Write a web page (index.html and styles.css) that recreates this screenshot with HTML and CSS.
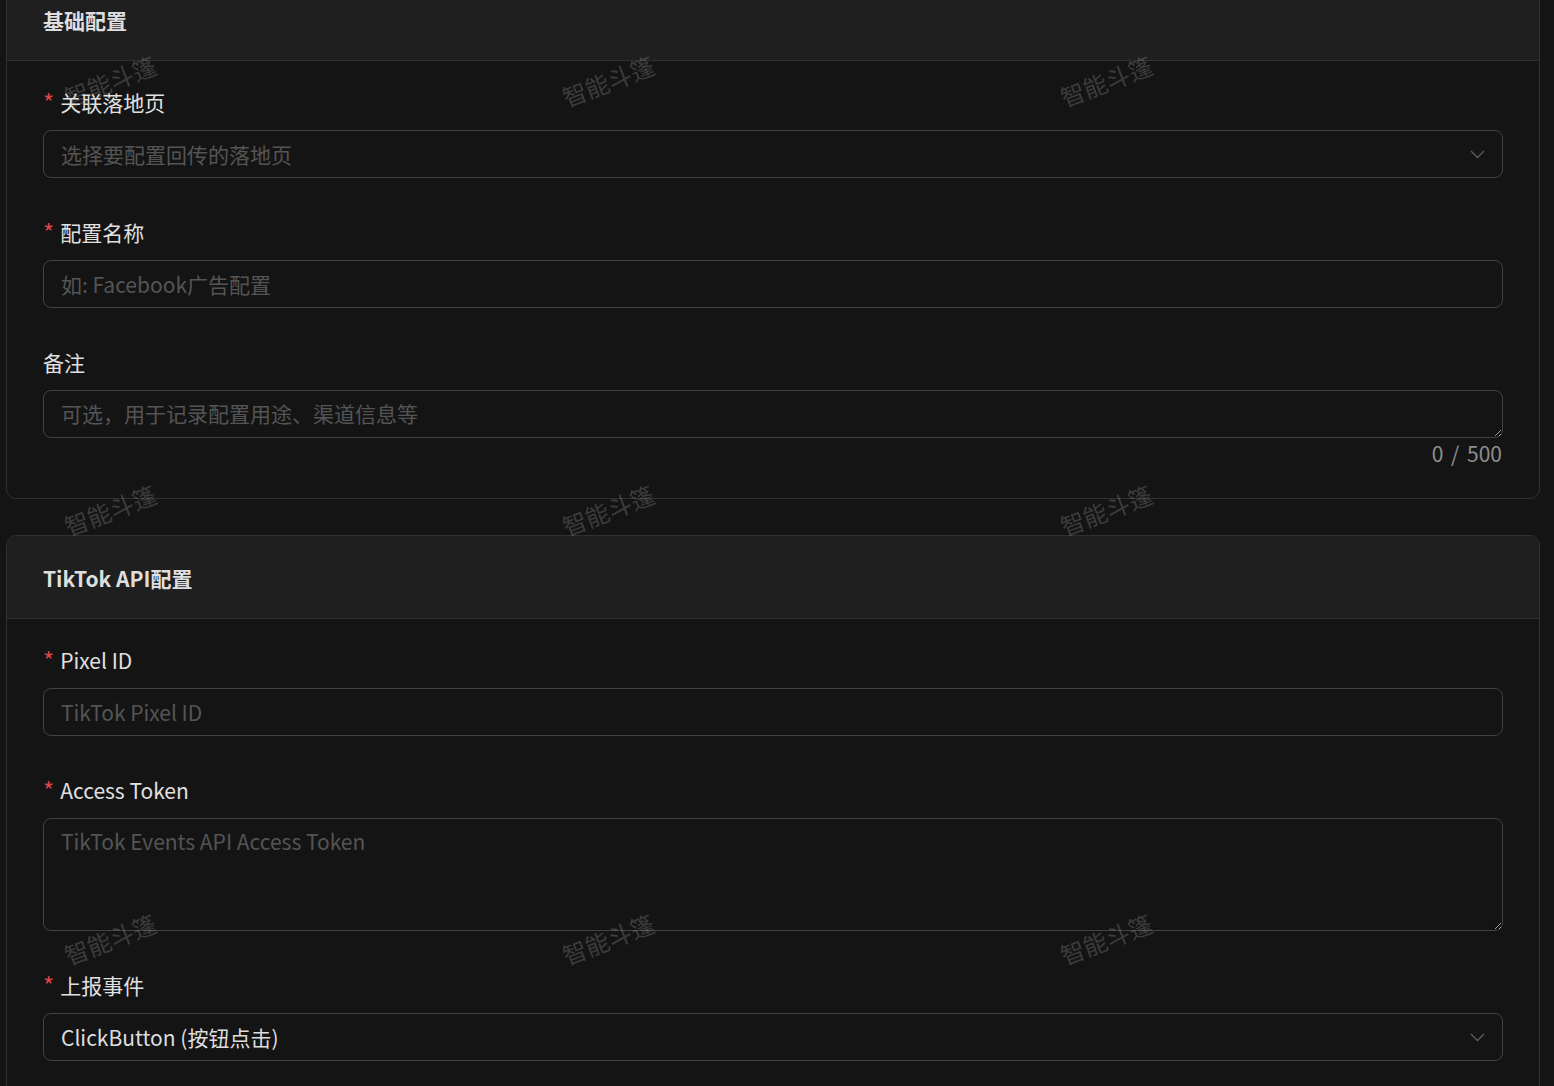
FILE: index.html
```html
<!DOCTYPE html>
<html lang="zh-CN">

<head>
    <meta charset="UTF-8">
    <meta name="viewport" content="width=device-width, initial-scale=1.0">
    <title>回传配置</title>
    <link rel="stylesheet" href="styles.css">
</head>

<body>
    <div class="page">
        <section class="card">
            <div class="card-head">基础配置</div>
            <div class="card-body">
                <div class="form-item">
                    <label class="form-label required">关联落地页</label>
                    <div class="select">
                        <span class="placeholder">选择要配置回传的落地页</span>
                        <svg class="arrow" width="15" height="9" viewBox="0 0 15 9"><path d="M1 1l6.5 6.5L14 1" fill="none" stroke="currentColor" stroke-width="1.3"/></svg>
                    </div>
                </div>

                <div class="form-item">
                    <label class="form-label required">配置名称</label>
                    <input class="input" type="text" placeholder="如: Facebook广告配置">
                </div>

                <div class="form-item last">
                    <label class="form-label">备注</label>
                    <textarea class="textarea short" placeholder="可选，用于记录配置用途、渠道信息等"></textarea>
                    <div class="counter">0 / 500</div>
                </div>
            </div>
        </section>

        <section class="card">
            <div class="card-head">TikTok API配置</div>
            <div class="card-body">
                <div class="form-item">
                    <label class="form-label required">Pixel ID</label>
                    <input class="input" type="text" placeholder="TikTok Pixel ID">
                </div>

                <div class="form-item">
                    <label class="form-label required">Access Token</label>
                    <textarea class="textarea tall" placeholder="TikTok Events API Access Token"></textarea>
                </div>

                <div class="form-item">
                    <label class="form-label required">上报事件</label>
                    <div class="select">
                        <span class="value">ClickButton (按钮点击)</span>
                        <svg class="arrow" width="15" height="9" viewBox="0 0 15 9"><path d="M1 1l6.5 6.5L14 1" fill="none" stroke="currentColor" stroke-width="1.3"/></svg>
                    </div>
                </div>
            </div>
        </section>
    </div>

    <!-- watermark layer -->
    <div class="watermark">
        <span>智能斗篷</span><span>智能斗篷</span><span>智能斗篷</span>
        <span>智能斗篷</span><span>智能斗篷</span><span>智能斗篷</span>
        <span>智能斗篷</span><span>智能斗篷</span><span>智能斗篷</span>
    </div>
</body>

</html>
```

FILE: styles.css
```css
body {
    margin: 0;
    background: #141414;
    color: #dcdcdc;
    font-family: "Noto Sans CJK SC", "Noto Sans", sans-serif;
    overflow: hidden;
}

.page {
    margin-top: -23px;
    padding: 0 14px 0 6px;
}

.card {
    border: 1px solid #303030;
    border-radius: 10px;
    background: #141414;
    margin-bottom: 36px;
    overflow: hidden;
}

.card-head {
    height: 83px;
    display: flex;
    align-items: center;
    padding: 2px 36px 0;
    box-sizing: border-box;
    background: #1f1f1f;
    border-bottom: 1px solid #303030;
    font-size: 21px;
    font-weight: 700;
    color: #dedede;
}

.card-body {
    padding: 26px 36px 30px;
}

.form-item {
    margin-bottom: 39px;
}

.form-item.last {
    margin-bottom: 0;
}

.form-label {
    display: flex;
    align-items: center;
    height: 30px;
    font-size: 21px;
    line-height: 30px;
    margin-bottom: 13px;
    color: #e0e0e0;
}

.form-label.required::before {
    content: "*";
    display: block;
    height: 30px;
    line-height: 30px;
    color: #dc4446;
    font-size: 24px;
    margin-right: 6px;
    margin-top: -1px;
}

.input,
.select,
.textarea {
    display: flex;
    align-items: center;
    width: 100%;
    box-sizing: border-box;
    height: 48px;
    padding: 0 17px;
    background: transparent;
    border: 1px solid #424242;
    border-radius: 8px;
    font-family: inherit;
    font-size: 21px;
    color: #dedede;
    outline: none;
    color-scheme: dark;
}

.input::placeholder,
.textarea::placeholder,
.placeholder {
    color: #545454;
}

.select {
    justify-content: space-between;
}

.select .arrow {
    color: #5c5c5c;
    margin-top: 1px;
}

.textarea {
    display: block;
    padding: 6px 17px;
    line-height: 32px;
    resize: vertical;
}

.textarea.short {
    height: 48px;
}

.textarea.tall {
    height: 113px;
}

.counter {
    text-align: right;
    font-size: 21px;
    line-height: 30px;
    word-spacing: 3px;
    color: #8f8f8f;
    padding-right: 1px;
}

.watermark {
    position: fixed;
    top: -134px;
    left: -139px;
    display: grid;
    grid-template-columns: repeat(3, 498px);
    grid-auto-rows: 429px;
    place-items: center;
    pointer-events: none;
}

.watermark span {
    font-size: 24px;
    color: rgba(255, 255, 255, 0.17);
    transform: rotate(-21deg);
    white-space: nowrap;
}
```
